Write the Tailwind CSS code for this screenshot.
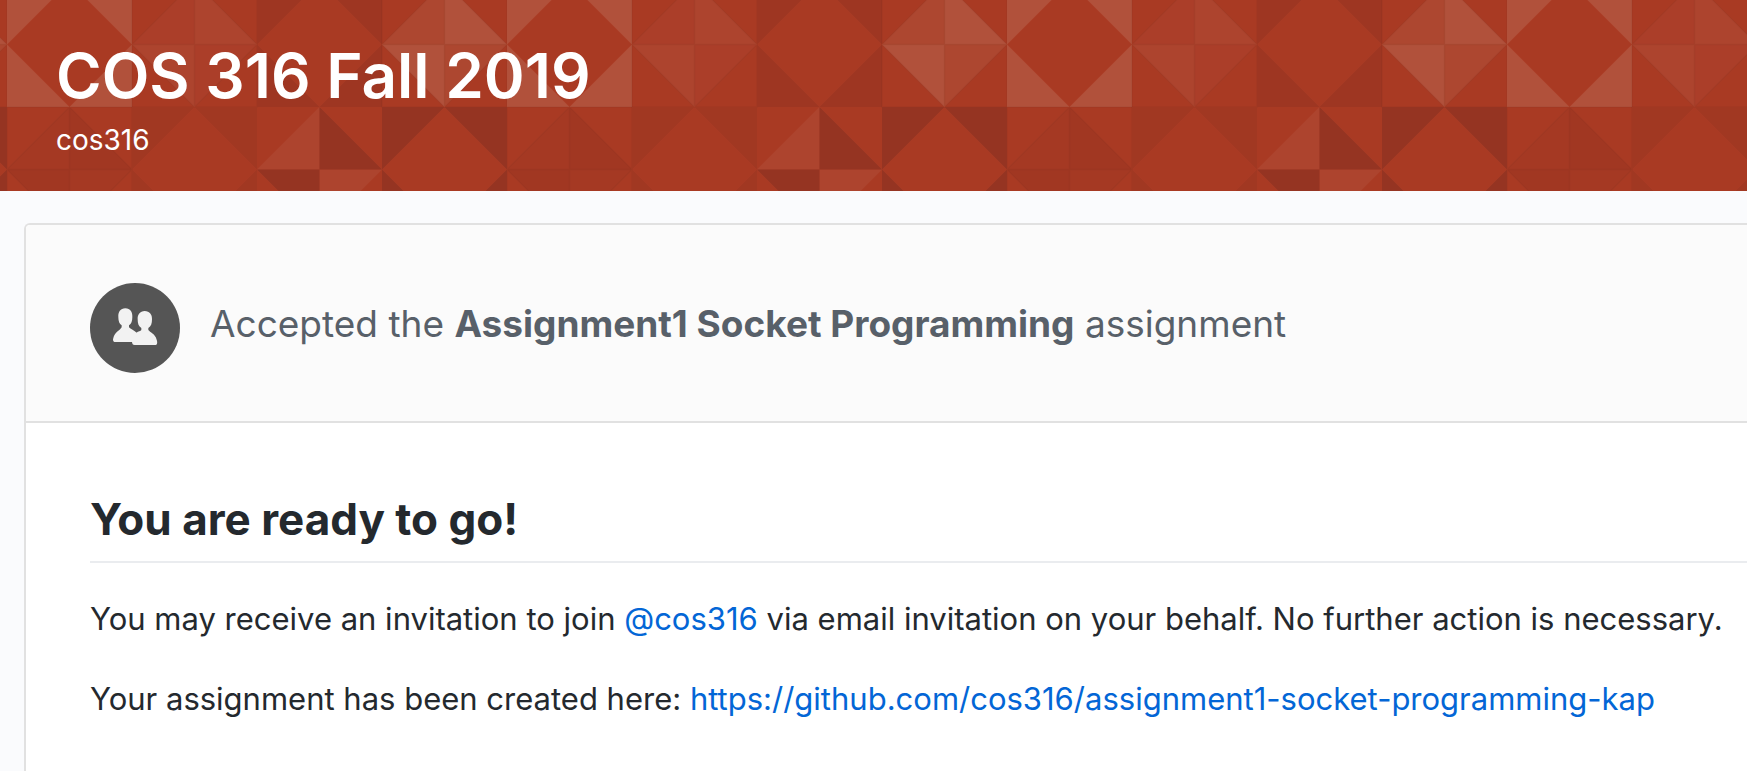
<!DOCTYPE html>
<html lang="en">
<head>
<meta charset="utf-8">
<title>COS 316 Fall 2019</title>
<script src="https://cdn.jsdelivr.net/npm/@tailwindcss/browser@4"></script>
</head>
<body class="flex min-h-screen flex-col overflow-x-hidden bg-[#fafbfd] font-['Inter','Liberation_Sans',sans-serif] text-[#24292e]">
<header class="relative bg-[#a93a23] px-14 pt-9 pb-[31px] text-white">
  <svg class="absolute inset-0 h-full w-full" aria-hidden="true">
    <defs>
      <!-- 125px tile: corners outside the diamond -->
      <path id="corners" d="M0 0H62.5L0 62.5ZM125 0V62.5L62.5 0ZM0 125V62.5L62.5 125ZM125 125H62.5L125 62.5Z"/>
      <!-- two opposite quarters of the diamond -->
      <path id="quartersA" d="M62.5 0V62.5H0ZM62.5 125V62.5H125Z"/>
      <path id="quartersB" d="M62.5 0V62.5H125ZM62.5 125V62.5H0Z"/>
      <path id="lines" d="M62.5 0L125 62.5L62.5 125L0 62.5ZM62.5 0V125M0 62.5H125M0 0H125V125H0Z" fill="none" stroke="#000" stroke-opacity=".04" stroke-width="1.5"/>
      <pattern id="triangles" width="500" height="250" patternUnits="userSpaceOnUse" patternTransform="translate(7 -18)">
        <use href="#corners" fill="#b1513b"/>
        <g transform="translate(125)"><use href="#quartersA" fill="#ab3e29"/><use href="#quartersB" fill="#ad442e"/><use href="#lines"/></g>
        <use href="#corners" x="250" fill="#9e3622"/>
        <g transform="translate(375)"><use href="#quartersA" fill="#ad4730"/><use href="#quartersB" fill="#b1513b"/><use href="#lines"/></g>
        <g transform="translate(0 125)"><use href="#quartersA" fill="#a53923"/><use href="#quartersB" fill="#a13722"/><use href="#lines"/></g>
        <use href="#corners" x="125" y="125" fill="#a13822"/>
        <g transform="translate(250 125)"><use href="#quartersA" fill="#ad442e"/><use href="#quartersB" fill="#953422"/></g>
        <use href="#corners" x="375" y="125" fill="#953422"/>
      </pattern>
    </defs>
    <rect width="100%" height="100%" fill="url(#triangles)"/>
  </svg>
  <h1 class="relative text-[62px] leading-20 font-semibold">COS 316 Fall 2019</h1>
  <p class="relative mt-1 text-[28px] leading-10">cos316</p>
</header>

<main class="mt-8 ml-6 grow rounded-tl-md border-t-2 border-l-2 border-[#e1e1e1] bg-white">
  <div class="flex items-center gap-[30px] rounded-tl-sm border-b-2 border-[#e1e1e1] bg-[#fbfbfb] px-16 pt-[58px] pb-12">
    <svg class="h-[90px] w-[90px] shrink-0" viewBox="0 0 270 270" aria-hidden="true">
      <circle cx="135" cy="135" r="135" fill="#555"/>
      <g fill="#f2f2f2">
        <path d="M106 76C121 76 128 87 127 102C127 114 124 123 117 127V133C121 138 134 143 140 149L148 177H75C69 177 68 170 70 165C74 148 90 142 95 133V127C88 123 85 114 85 102C84 87 91 76 106 76Z"/>
        <path d="M164 84C179 84 187 95 186 109C186 122 183 131 175 135V141C180 148 195 152 200 170C203 179 202 186 195 186H134C128 186 127 183 126 178L139 149C145 144 152 145 154 141V135C146 131 143 122 143 109C142 95 150 84 164 84Z"/>
      </g>
    </svg>
    <p class="pb-2 text-[37px] leading-12 text-[#586069]">Accepted the <strong class="font-bold">Assignment1 Socket Programming</strong> assignment</p>
  </div>
  <div class="pt-[66px] pl-16">
    <h2 class="border-b-2 border-[#eaecef] pb-3 text-[44px] leading-15 font-bold">You are ready to go!</h2>
    <p class="mt-8 text-[31px] leading-12">You may receive an invitation to join <a href="https://github.com/cos316" class="text-[#0366d6]">@cos316</a> via email invitation on your behalf. No further action is necessary.</p>
    <p class="mt-8 text-[31px] leading-12">Your assignment has been created here: <a href="https://github.com/cos316/assignment1-socket-programming-kap" class="text-[#0366d6]">https://github.com/cos316/assignment1-socket-programming-kap</a></p>
  </div>
</main>
</body>
</html>
